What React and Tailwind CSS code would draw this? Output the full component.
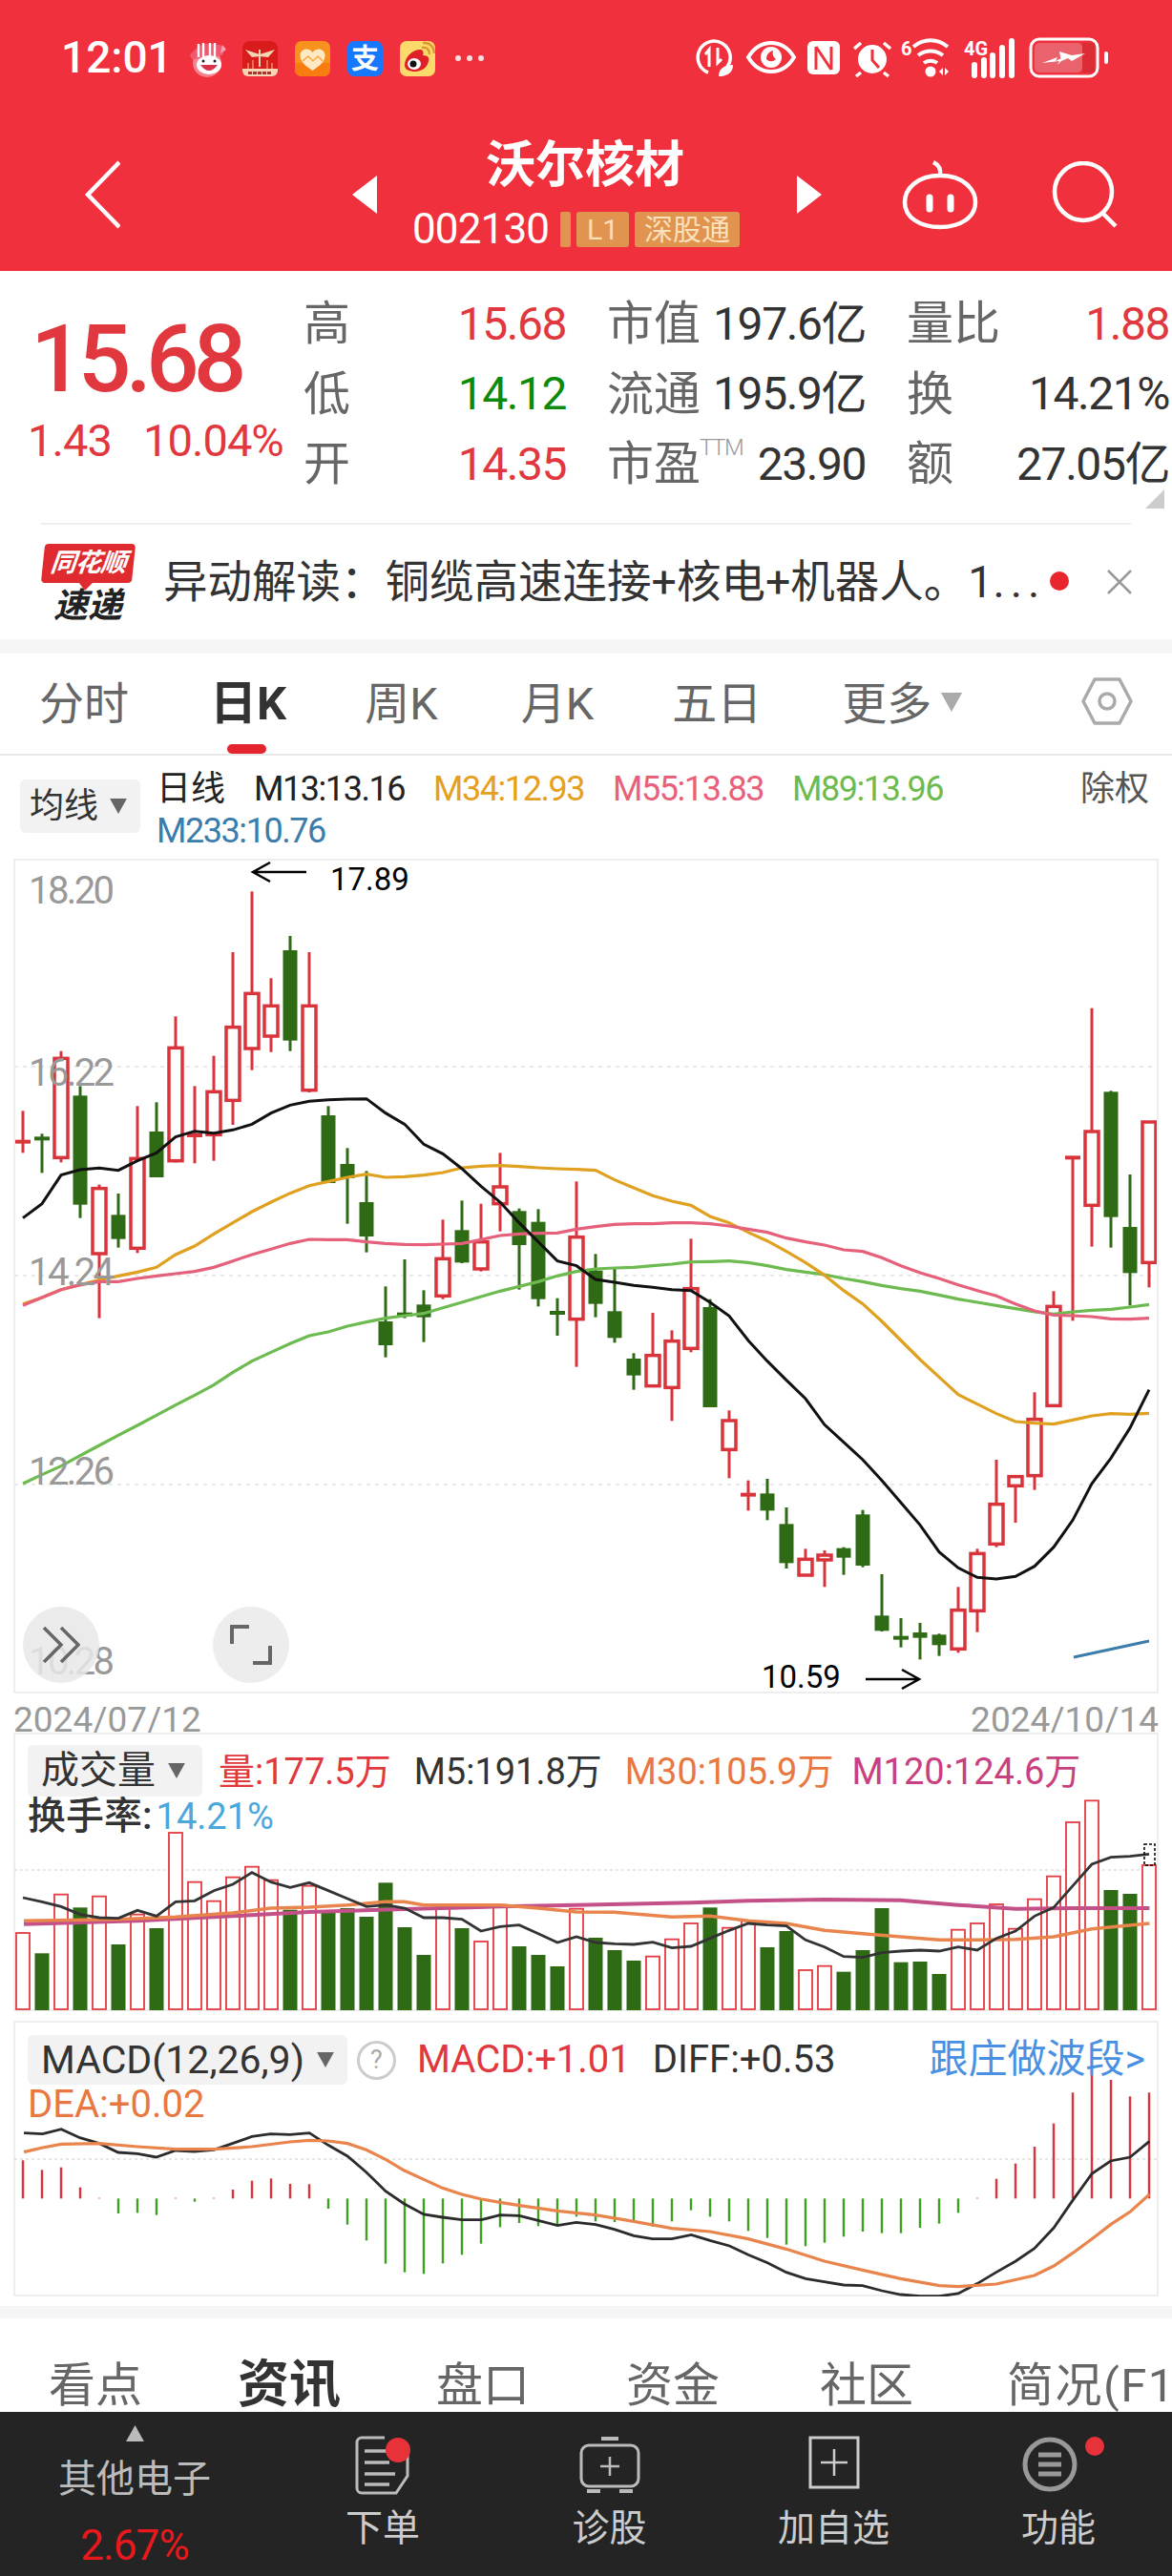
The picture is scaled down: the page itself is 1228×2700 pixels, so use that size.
import React from 'react'

// chart data was read off the reference in thirds of a pixel: y = 880 + p / 3
const candles = [
  ['r',853,950,950,985],['g',925,940,940,1048],['r',665,688,1000,1015],['g',775,805,1148,1190],['r',1085,1097,1302,1505],
  ['g',1113,1180,1256,1283],['r',838,1003,1285,1300],['g',826,918,1062,1062],['r',556,655,1010,1015],['r',775,930,930,1018],
  ['r',680,793,928,1010],['r',354,590,820,897],['r',163,484,657,725],['r',436,523,618,668],['g',303,348,632,665],
  ['r',354,523,788,795],['g',838,867,1080,1080],['g',970,1020,1065,1208],['g',1042,1140,1248,1298],['g',1405,1515,1590,1628],
  ['g',1320,1493,1493,1505],['g',1417,1462,1502,1580],['r',1195,1318,1435,1445],['g',1135,1228,1330,1332],['r',1145,1265,1350,1358],
  ['r',985,1092,1145,1232],['g',1160,1168,1275,1415],['g',1162,1202,1445,1468],['g',1442,1488,1488,1560],['r',1075,1250,1508,1658],
  ['g',1303,1355,1460,1502],['g',1347,1483,1567,1582],['g',1615,1632,1685,1730],['r',1488,1622,1718,1718],['r',1543,1577,1723,1828],
  ['r',1255,1412,1600,1612],['g',1445,1470,1785,1785],['r',1795,1827,1918,2008],['r',2015,2060,2060,2110],['g',2010,2056,2110,2140],
  ['g',2100,2152,2275,2292],['r',2230,2263,2313,2313],['r',2235,2250,2265,2350],['g',2225,2228,2258,2312],['g',2108,2122,2283,2288],
  ['g',2310,2440,2488,2490],['g',2448,2510,2510,2540],['g',2463,2493,2510,2578],['g',2497,2500,2533,2567],['r',2350,2423,2545,2557],
  ['r',2230,2245,2425,2492],['r',1950,2090,2215,2225],['r',2002,2003,2032,2148],['r',1738,1823,2000,2045],['r',1420,1468,1780,1780],
  ['r',1000,1000,1000,1513],['r',530,918,1150,1280],['g',790,793,1187,1283],['g',1053,1218,1363,1465],['r',888,888,1330,1408],
]
const m13 = [1190,1145,1055,1038,1033,1040,1010,985,935,917,923,913,895,860,835,823,818,816,815,860,895,958,988,1035,1090,1140,1205,1265,1325,1340,1383,1392,1402,1408,1415,1418,1455,1498,1575,1640,1700,1758,1840,1895,1950,2015,2085,2155,2240,2290,2320,2325,2317,2285,2225,2140,2025,1945,1850,1730]
const m34 = [1460,1440,1415,1400,1385,1372,1360,1345,1305,1278,1240,1205,1170,1140,1112,1088,1075,1062,1052,1062,1060,1055,1047,1032,1027,1025,1028,1032,1035,1037,1040,1070,1095,1120,1137,1150,1185,1205,1235,1262,1295,1330,1370,1418,1460,1515,1575,1635,1690,1745,1775,1805,1830,1835,1838,1825,1812,1805,1807,1804]
const m55 = [1465,1440,1415,1400,1390,1390,1380,1372,1365,1358,1345,1325,1305,1288,1270,1257,1258,1258,1265,1270,1273,1274,1272,1270,1258,1245,1240,1238,1237,1225,1217,1210,1208,1208,1205,1205,1208,1215,1225,1235,1253,1265,1275,1290,1295,1315,1340,1362,1380,1400,1418,1435,1460,1482,1495,1497,1500,1507,1508,1505]
const m89 = [2025,1997,1970,1937,1905,1873,1842,1810,1778,1747,1715,1675,1640,1612,1585,1560,1548,1530,1517,1505,1497,1490,1472,1455,1437,1420,1405,1390,1372,1358,1350,1347,1345,1340,1335,1328,1327,1325,1330,1340,1352,1360,1368,1380,1390,1402,1412,1420,1432,1445,1455,1465,1475,1485,1492,1485,1480,1477,1470,1462]

const volTops = [678,742,557,598,563,714,620,663,363,518,578,503,470,512,605,530,610,600,627,520,660,747,600,663,705,590,720,747,783,602,693,732,765,752,698,648,598,662,640,723,672,795,782,800,732,600,770,768,807,668,648,588,665,572,500,330,262,543,555,465]
const volRed = [0,2,4,6,8,9,10,11,12,13,15,22,24,25,29,33,34,35,37,38,41,42,49,50,51,52,53,54,55,56,59]
const volM5 = [567,580,595,620,630,632,607,625,580,577,545,525,488,518,535,520,545,570,595,590,600,630,630,635,672,658,653,680,708,690,708,712,714,707,725,720,695,670,648,653,656,700,722,752,755,740,735,732,735,722,732,695,672,625,598,530,462,440,437,430]
const volM30 = [[32,640],[158,635],[235,628],[311,615],[362,600],[414,597],[465,590],[516,580],[541,580],[567,590],[669,590],[720,600],[771,612],[822,613],[899,628],[950,625],[1001,640],[1052,648],[1103,670],[1154,680],[1205,690],[1257,700],[1308,700],[1359,698],[1410,690],[1461,665],[1538,648]]
const volM120 = [[32,650],[184,640],[311,625],[414,612],[541,603],[669,595],[771,590],[925,583],[1001,577],[1103,573],[1205,575],[1282,590],[1359,602],[1435,600],[1538,600]]

const macdBars = [433,463,455,518,551,600,598,605,551,563,551,525,497,490,507,508,585,635,685,758,785,790,757,730,695,643,630,640,633,610,625,627,627,642,625,590,610,625,655,677,698,703,692,673,657,662,662,645,632,598,551,491,443,390,317,220,165,180,232,220]
const diff = [[32,347],[57,350],[82,335],[107,362],[133,380],[158,408],[184,412],[209,423],[235,402],[260,405],[286,400],[311,380],[337,358],[362,350],[388,352],[414,347],[439,385],[465,420],[490,470],[516,530],[541,570],[567,603],[592,612],[618,620],[644,620],[669,605],[695,607],[720,622],[746,638],[771,628],[797,635],[822,650],[848,670],[873,680],[899,680],[925,667],[950,685],[976,702],[1001,730],[1027,755],[1052,785],[1078,805],[1103,815],[1129,825],[1154,827],[1180,843],[1205,855],[1231,860],[1257,860],[1282,852],[1308,820],[1333,785],[1359,750],[1384,710],[1410,645],[1435,560],[1461,475],[1486,435],[1512,423],[1538,373]]
const dea = [[32,407],[57,393],[82,382],[133,380],[184,390],[235,398],[286,398],[337,390],[388,375],[414,370],[439,372],[465,380],[490,400],[516,430],[541,465],[567,493],[592,520],[618,540],[644,555],[669,565],[695,575],[746,592],[797,605],[848,625],[899,647],[950,657],[1001,680],[1052,712],[1103,750],[1154,778],[1205,805],[1257,827],[1282,830],[1333,822],[1384,795],[1410,765],[1435,725],[1461,680],[1486,635],[1512,595],[1538,540]]

const series = (arr, base) => arr.map((p, i) => `${24 + 20 * i},${base + p / 3}`).join(' ')
const pairs = (arr, base) => arr.map(([x, p]) => `${x / 1.277},${base + p / 3}`).join(' ')
const RED = '#d9343c'
const GREEN = '#2f6a15'

function Tri({ className, up }) {
  return (
    <svg className={className} viewBox="0 0 20 18">
      <path d={up ? 'M10 0L20 18H0z' : 'M0 0H20L10 18z'} fill="currentColor" />
    </svg>
  )
}

function AppIcons() {
  return (
    <svg className="w-[330px] h-[60px] shrink-0" viewBox="190 30 330 60">
      <circle cx="217" cy="66" r="15" fill="#f7818f" />
      <path d="M199 58c6-8 12-12 18-12s14 0 19 4l-3 8-32 4z" fill="#ef5a72" />
      <path d="M208 46v14M213 45v15M220 45v15M225 45v15" stroke="#fff" strokeWidth="2.4" />
      <ellipse cx="219" cy="68" rx="13" ry="10" fill="#fff" />
      <path d="M210 68q9 12 18 0z" fill="#d8324a" />
      <circle cx="213" cy="64" r="1.5" fill="#222" /><circle cx="225" cy="64" r="1.5" fill="#222" />
      <path d="M233 47l4 5-6 4z" fill="#f7a2b0" />

      <rect x="254" y="43" width="37" height="37" rx="8" fill="#d81c1c" />
      <path d="M254 72h37v2a6 6 0 0 1-6 6h-25a6 6 0 0 1-6-6z" fill="#f6d5b5" />
      <path d="M257 52l15 5 16-5-7 8-9-1-8 1z" fill="#f6d5b5" />
      <path d="M272 52v18" stroke="#f6d5b5" strokeWidth="2" />
      <path d="M260 72v-6m5 6v-9m15 9v-9m5 9v-6" stroke="#ef8a70" strokeWidth="1.5" />
      <path d="M260 76.500h25" stroke="#a33" strokeWidth="3" strokeDasharray="4 1" />

      <rect x="309" y="43" width="37" height="37" rx="7" fill="#f8921e" />
      <path d="M309 66h37v7a7 7 0 0 1-7 7h-23a7 7 0 0 1-7-7z" fill="#f97c10" />
      <path d="M327.500 74c-9-6-13-10-13-16 0-7 9-9 13-3 4-6 13-4 13 3 0 6-4 10-13 16z" fill="#ffe9c4" />
      <path d="M317 64l6-5 5 5 5-5 5 5" stroke="#f8a83e" strokeWidth="1.500" fill="none" />

      <rect x="364" y="43" width="37" height="37" rx="7" fill="#1677ff" />
      <text x="382.500" y="72" fontSize="29" fontWeight="700" fill="#fff" textAnchor="middle">支</text>

      <rect x="419" y="43" width="37" height="37" rx="7" fill="#fbd96a" />
      <path d="M424 68c0-9 10-17 17-16 3 1 3 4 2 6 6 0 7 3 6 6-1 7-8 11-14 11-6 0-11-2-11-7z" fill="#df2029" />
      <ellipse cx="434" cy="67" rx="7" ry="6" fill="#fff" />
      <circle cx="433" cy="67" r="3.500" fill="#111" />
      <path d="M442 50c6-1 8 3 8 7M443 45c8-1 12 5 12 11" stroke="#d99a32" strokeWidth="2.500" fill="none" />

      <circle cx="480" cy="61" r="3" fill="#f7dfe0" /><circle cx="492" cy="61" r="3" fill="#f7dfe0" /><circle cx="504" cy="61" r="3" fill="#f7dfe0" />
    </svg>
  )
}

function StatusIcons() {
  return (
    <svg className="w-[450px] h-[60px] shrink-0" viewBox="720 30 450 60" fill="none" stroke="#fff">
      <path d="M762 70a17 17 0 1 0-20 6" strokeWidth="3.500" />
      <path d="M743 70V52l-4 5M752 50v16l4-4" strokeWidth="3" />
      <path d="M753 80c0-8 6-12 15-12 0 8-6 12-15 12z" fill="#fff" stroke="none" />

      <path d="M784 60c6-10 15-15 24-15s18 5 24 15c-6 10-15 15-24 15s-18-5-24-15z" strokeWidth="4" />
      <circle cx="808" cy="60" r="11" fill="#fff" stroke="none" />
      <path d="M803 62c0-5 3-8 7-9-1 4 0 7 3 9-3 3-7 3-10 0z" fill="#f0313d" stroke="none" />

      <rect x="846" y="43" width="34" height="35" rx="6" fill="#fff" stroke="none" />
      <path d="M855 49v24M871 49v24M855 49l16 24" stroke="#f0313d" strokeWidth="3" />

      <circle cx="914" cy="62" r="15" fill="#fff" stroke="none" />
      <path d="M914 52v11l7 8" stroke="#f0313d" strokeWidth="3" />
      <path d="M895 51l7-6M933 51l-7-6M902 76l-5 4M926 76l5 4" strokeWidth="3.500" />

      <text x="944" y="58" fontSize="20" fontWeight="700" fill="#fff" stroke="none">6</text>
      <path d="M957 49c11-9 25-9 36 0M962 58c8-6 18-6 26 0M968 66c4-3 10-3 14 0" strokeWidth="4" />
      <circle cx="975" cy="75" r="5.500" fill="#fff" stroke="none" />
      <path d="M984 75l4-4v8zM990 71l4 4-4 4z" fill="#fff" stroke="none" />

      <text x="1010" y="58" fontSize="20" fontWeight="700" fill="#fff" stroke="none">4G</text>
      <path d="M1021 68v11M1031 63v16M1040 58v21M1050 50v29M1060 43v36" strokeWidth="6" strokeLinecap="round" />

      <rect x="1080" y="41" width="70" height="39" rx="9" strokeWidth="3" />
      <rect x="1084" y="45" width="50" height="31" rx="5" fill="#e9626c" stroke="none" />
      <path d="M1147 45h-13v31h13z" fill="#dc2c36" stroke="none" />
      <path d="M1092 66l16-6-2 4 12-6-10 10 2-4zM1110 54l13 4 14-2-14 8-4-3-7 3z" fill="#fff" stroke="none" />
      <rect x="1157" y="54" width="4" height="13" rx="2" fill="#fff" stroke="none" />
    </svg>
  )
}

function Header() {
  return (
    <div className="h-[284px] shrink-0 bg-[#f0313d] text-white">
      <div className="flex items-center h-[60px] pl-[64px] pr-[58px] mt-[30px]">
        <span className="w-[126px] shrink-0 text-[46px] font-medium leading-none">12:01</span>
        <AppIcons />
        <div className="ml-auto"><StatusIcons /></div>
      </div>
      <div className="flex items-center h-[118px] mt-[55px] pl-[88px]">
        <svg className="w-[38px] h-[72px] shrink-0" viewBox="86 164 38 72" fill="none" stroke="#fff" strokeWidth="4.500">
          <polyline points="123,166 90,200 123,234" />
        </svg>
        <svg className="w-[26px] h-[40px] ml-[243px] shrink-0" viewBox="0 0 26 40"><path d="M26 0V40L0 20z" fill="#fff" /></svg>
        <div className="w-[440px] shrink-0 flex flex-col">
          <div className="text-center text-[52px] font-bold leading-[60px] h-[60px] -mt-[4px] -ml-[4px]">沃尔核材</div>
          <div className="flex items-center pl-[37px] h-[40px] mt-[16px]">
            <span className="text-[44px] tracking-[-0.02em] leading-none w-[155px] shrink-0">002130</span>
            <span className="w-[11px] h-[37px] bg-[#e09450] rounded-[2px] shrink-0" />
            <span className="ml-[6px] w-[55px] h-[37px] bg-[#e09450] rounded-[3px] text-[#fbe0bd] text-[30px] leading-[37px] text-center shrink-0">L1</span>
            <span className="ml-[6px] w-[110px] h-[37px] bg-[#e09450] rounded-[3px] text-[#fbe0bd] text-[30px] leading-[37px] text-center shrink-0">深股通</span>
          </div>
        </div>
        <svg className="w-[26px] h-[40px] shrink-0" viewBox="0 0 26 40"><path d="M0 0V40L26 20z" fill="#fff" /></svg>
        <svg className="w-[82px] h-[74px] ml-[83px] shrink-0" viewBox="942 165 82 74" fill="none" stroke="#fff" strokeWidth="4.500">
          <path d="M983 182c24 0 37 14 37 28 0 16-16 26-37 26s-37-10-37-26c0-14 13-28 37-28z" />
          <path d="M983 182c1-7-1-11-7-14" />
          <path d="M972 205v12M994 205v12" strokeWidth="7" strokeLinecap="round" />
        </svg>
        <svg className="w-[70px] h-[70px] ml-[76px] shrink-0" viewBox="1099 168 70 70" fill="none" stroke="#fff" strokeWidth="4.500">
          <circle cx="1132" cy="200" r="30" />
          <path d="M1152 222l14 14" />
        </svg>
      </div>
    </div>
  )
}

const RED_T = 'text-[#e0383e]'
const GREEN_T = 'text-[#0c8a0c]'
const DARK_T = 'text-[#333333]'
const quoteCells = [
  ['高', '15.68', RED_T], ['市值', '197.6亿', DARK_T], ['量比', '1.88', RED_T],
  ['低', '14.12', GREEN_T], ['流通', '195.9亿', DARK_T], ['换', '14.21%', DARK_T],
  ['开', '14.35', RED_T], ['市盈', '23.90', DARK_T], ['额', '27.05亿', DARK_T],
]

function Quote() {
  return (
    <div className="relative h-[264px] shrink-0 flex pt-[18px]">
      <div className="w-[318px] shrink-0 pl-[32px]">
        <div className="mt-[25px] text-[98px] leading-[100px] tracking-[-0.06em] font-medium text-[#e0383e]">15.68</div>
        <div className="mt-[11px] -ml-[3px] flex text-[47px] leading-[48px] tracking-[-0.02em] text-[#e0383e] whitespace-nowrap">
          <span className="w-[121px]">1.43</span>
          <span>10.04%</span>
        </div>
      </div>
      <div className="mt-[1px] grid grid-cols-[275px_271px_275px] gap-x-[43px] content-start">
        {quoteCells.map(([k, v, c]) => (
          <div key={k} className="h-[73.5px] flex items-center justify-between whitespace-nowrap">
            <span className="text-[49px] text-[#666666] leading-none">
              {k}
              {k === '市盈' && <sup className="text-[24px] font-light text-[#999999] -ml-[1px] tracking-[-0.06em] align-[14px]">TTM</sup>}
            </span>
            <span className={`text-[48px] tracking-[-0.03em] leading-none ${c}`}>{v}</span>
          </div>
        ))}
      </div>
      <svg className="absolute right-[8px] bottom-[15px] w-[20px] h-[20px]" viewBox="0 0 20 20"><path d="M20 0V20H0z" fill="#cccccc" /></svg>
    </div>
  )
}

function News() {
  return (
    <>
      <div className="h-[2px] mx-[43px] bg-[#eeeeee] shrink-0" />
      <div className="h-[120px] shrink-0 flex items-center pl-[43px]">
        <div className="w-[98px] shrink-0 flex flex-col items-center">
          <div className="relative w-[95px] h-[41px] bg-[#df2b30] rounded-[4px] -skew-x-6 text-white text-[27px] font-bold italic leading-[41px] text-center tracking-[-0.02em]">
            同花顺
            <span className="absolute left-[40px] -bottom-[8px] w-0 h-0 border-x-[7px] border-x-transparent border-t-[8px] border-t-[#df2b30]" />
          </div>
          <div className="mt-[8px] text-[36px] font-bold italic leading-[32px] text-[#222222]">速递</div>
        </div>
        <div className="ml-[30px] w-[921px] shrink-0 text-[46.500px] text-[#333333] leading-none whitespace-nowrap">
          异动解读：铜缆高速连接+核电+机器人。1<span className="tracking-[6px]">...</span>
        </div>
        <span className="ml-[8px] -mt-[2px] w-[20px] h-[20px] rounded-full bg-[#e9262e] shrink-0" />
        <svg className="w-[26px] h-[26px] ml-[40px] shrink-0" viewBox="0 0 26 26" stroke="#999999" strokeWidth="2.500"><path d="M1 1l24 24M25 1L1 25" /></svg>
      </div>
      <div className="h-[15px] bg-[#f5f5f5] shrink-0" />
    </>
  )
}

const tabs = [
  ['分时', 'ml-[0px] text-[#666666]'],
  ['日K', 'ml-[85px] text-[49px] text-[#333333] font-bold'],
  ['周K', 'ml-[82px] text-[#666666]'],
  ['月K', 'ml-[87px] text-[#666666]'],
  ['五日', 'ml-[82px] text-[#666666]'],
  ['更多', 'ml-[84px] text-[#666666]'],
]

function Tabs() {
  return (
    <div className="relative h-[107px] shrink-0 border-b-2 border-[#e8e8e8] flex items-center pl-[41px]">
      {tabs.map(([t, c]) => (
        <span key={t} className={`text-[47px] leading-none whitespace-nowrap ${c}`}>{t}</span>
      ))}
      <Tri className="w-[24px] h-[20px] ml-[9px] text-[#aaaaaa] mb-[3px]" />
      <svg className="w-[54px] h-[52px] ml-auto mr-[41px] shrink-0 -mt-[6px]" viewBox="0 0 54 52" fill="none" stroke="#aaaaaa" strokeWidth="3.500">
        <path d="M14 3h26l12 23-12 23H14L2 26z" strokeLinejoin="round" />
        <circle cx="27" cy="26" r="8" />
      </svg>
      <span className="absolute left-[238px] bottom-0 w-[41px] h-[10px] rounded-full bg-[#e5252d]" />
    </div>
  )
}

function MaLegend() {
  return (
    <div className="h-[108px] shrink-0 flex pl-[21px] pr-[24px]">
      <div className="mt-[25px] w-[126px] h-[56px] bg-[#f2f2f2] rounded-[6px] flex items-center pl-[10px] shrink-0">
        <span className="text-[36px] text-[#333333] leading-none">均线</span>
        <Tri className="w-[20px] h-[16px] ml-[11px] text-[#666666]" />
      </div>
      <div className="ml-[17px] flex-1 pt-[15px] text-[36px] tracking-[-0.04em] whitespace-nowrap">
        <div className="flex h-[40px] leading-[40px] items-center">
          <span className="w-[102px] tracking-normal text-[#222222]">日线</span>
          <span className="w-[188px] text-[#222222]">M13:13.16</span>
          <span className="w-[188px] text-[#e5a020]">M34:12.93</span>
          <span className="w-[188px] text-[#e8607a]">M55:13.83</span>
          <span className="text-[#6dbb50]">M89:13.96</span>
          <span className="ml-auto tracking-normal text-[#555555]">除权</span>
        </div>
        <div className="h-[47px] leading-[49px] text-[#3a7cab]">M233:10.76</div>
      </div>
    </div>
  )
}

function Candle({ d, i }) {
  const [c, high, top, bottom, low] = d
  const x = 24 + 20 * i
  const y = (p) => 880 + p / 3
  const color = c === 'r' ? RED : GREEN
  const flat = top === bottom
  return (
    <g>
      <line x1={x} x2={x} y1={y(high)} y2={y(low)} stroke={color} strokeWidth="3" />
      {flat ? (
        <rect x={x - 8} y={y(top) - 2} width="16" height="4" fill={color} />
      ) : c === 'r' ? (
        <rect x={x - 7} y={y(top)} width="14" height={(bottom - top) / 3} fill="#fff" stroke={color} strokeWidth="3.500" />
      ) : (
        <rect x={x - 7.500} y={y(top)} width="15" height={(bottom - top) / 3} fill={color} />
      )}
    </g>
  )
}

const axisLabel = 'absolute left-[16px] text-[40px] leading-none tracking-[-0.065em] text-[#999999]'

function MainChart() {
  return (
    <div className="relative ml-[14px] w-[1200px] h-[875px] shrink-0 outline-2 -outline-offset-2 outline-[#eeeeee]">
      <svg className="block w-[1200px] h-[875px]" viewBox="14 900 1200 875" fill="none">
        {[1118, 1337, 1556].map((y) => (
          <line key={y} x1="15" x2="1213" y1={y} y2={y} stroke="#e2e2e2" strokeWidth="1.500" strokeDasharray="4 5" />
        ))}
        {candles.map((d, i) => <Candle key={i} d={d} i={i} />)}
        <polyline points={series(m89, 880)} stroke="#6dbb50" strokeWidth="3.200" />
        <polyline points={series(m34, 880)} stroke="#e0a020" strokeWidth="3.200" />
        <polyline points={series(m55, 880)} stroke="#e5607a" strokeWidth="3.200" />
        <polyline points={series(m13, 880)} stroke="#111111" strokeWidth="3" />
        <line x1="1125" y1="1737" x2="1204" y2="1720" stroke="#3a7cab" strokeWidth="3" />
        <g stroke="#000000" strokeWidth="2.500">
          <path d="M321 914H265M283 904l-18 10 18 10" />
          <path d="M907 1760H963M945 1750l18 10-18 10" />
        </g>
      </svg>
      <span className={`${axisLabel} top-[14px]`}>18.20</span>
      <span className={`${axisLabel} top-[205px]`}>16.22</span>
      <span className={`${axisLabel} top-[414px]`}>14.24</span>
      <span className={`${axisLabel} top-[623px]`}>12.26</span>
      <span className={`${axisLabel} top-[822px]`}>10.28</span>
      <span className="absolute left-[332px] top-[5px] text-[33px] leading-none text-black">17.89</span>
      <span className="absolute left-[784px] top-[841px] text-[33px] leading-none text-black">10.59</span>
      <div className="absolute left-[10px] top-[784px] w-[80px] h-[80px] rounded-full bg-[#e8e8e8]/85 flex items-center justify-center">
        <svg className="w-[40px] h-[40px]" viewBox="0 0 40 40" fill="none" stroke="#666666" strokeWidth="3.500">
          <path d="M2 2l18 18L2 38M20 2l18 18-18 18" />
        </svg>
      </div>
      <div className="absolute left-[209px] top-[784px] w-[80px] h-[80px] rounded-full bg-[#ededed] flex items-center justify-center">
        <svg className="w-[44px] h-[42px]" viewBox="0 0 44 42" fill="none" stroke="#666666" strokeWidth="4">
          <path d="M20 2H2v18M42 22v18H24" />
        </svg>
      </div>
    </div>
  )
}

function VolumePanel() {
  const y = (p) => 1800 + p / 3
  return (
    <div className="relative ml-[14px] w-[1200px] h-[292px] shrink-0 outline-2 -outline-offset-2 outline-[#eeeeee]">
      <svg className="absolute inset-0 w-[1200px] h-[292px]" viewBox="14 1816 1200 292" fill="none">
        <line x1="15" x2="1213" y1="1960" y2="1960" stroke="#d0d0d0" strokeWidth="1.200" strokeDasharray="3 3" />
        {volTops.map((p, i) => {
          const x = 24 + 20 * i
          return volRed.includes(i) ? (
            <rect key={i} x={x - 7} y={y(p)} width="14" height={2106 - y(p)} fill="#fff" stroke="#e33b42" strokeWidth="1.800" />
          ) : (
            <rect key={i} x={x - 7.500} y={y(p)} width="15" height={2107 - y(p)} fill={GREEN} />
          )
        })}
        <polyline points={pairs(volM120, 1800)} stroke="#c45088" strokeWidth="4" />
        <polyline points={pairs(volM30, 1800)} stroke="#e8844c" strokeWidth="3.500" />
        <polyline points={series(volM5, 1800)} stroke="#333333" strokeWidth="2.800" />
        <rect x="1199" y="1933" width="11" height="22" stroke="#000" strokeWidth="1.500" strokeDasharray="3 2" />
      </svg>
      <div className="relative pl-[15px] pt-[13px] whitespace-nowrap text-[38px]">
        <div className="flex items-center h-[54px]">
          <div className="w-[183px] h-[54px] bg-[#f2f2f2] rounded-[6px] flex items-center pl-[14px] shrink-0">
            <span className="text-[40px] text-[#333333] leading-none">成交量</span>
            <Tri className="w-[20px] h-[16px] ml-[12px] text-[#666666]" />
          </div>
          <span className="ml-[17px] pt-[3px] text-[#e0383e]">量:177.5万</span>
          <span className="ml-[24px] pt-[3px] text-[#333333]">M5:191.8万</span>
          <span className="ml-[24px] pt-[3px] text-[#e87840]">M30:105.9万</span>
          <span className="ml-[19px] pt-[3px] text-[#c84080]">M120:124.6万</span>
        </div>
        <div className="flex items-center h-[40px] pt-[2px]">
          <span className="text-[40px] font-medium text-[#333333]">换手率:</span>
          <span className="ml-[4px] text-[#4aa8dc]">14.21%</span>
        </div>
      </div>
    </div>
  )
}

function MacdPanel() {
  const y = (p) => 2120 + p / 3
  return (
    <div className="relative ml-[14px] w-[1200px] h-[289px] mt-[10px] shrink-0 outline-2 -outline-offset-2 outline-[#eeeeee]">
      <svg className="absolute inset-0 w-[1200px] h-[289px]" viewBox="14 2118 1200 289" fill="none">
        <line x1="15" x2="1213" y1="2263" y2="2263" stroke="#d0d0d0" strokeWidth="1.200" strokeDasharray="3 3" />
        {macdBars.map((p, i) => {
          const x = 24 + 20 * i
          return <line key={i} x1={x} x2={x} y1={y(553)} y2={y(p)} stroke={p < 553 ? RED : '#3fa020'} strokeWidth="2.400" />
        })}
        <polyline points={pairs(diff, 2120)} stroke="#2b2b2b" strokeWidth="2.800" />
        <polyline points={pairs(dea, 2120)} stroke="#e8844c" strokeWidth="3.200" />
      </svg>
      <div className="relative pl-[15px] pt-[15px] whitespace-nowrap text-[40px]">
        <div className="flex items-center h-[52px]">
          <div className="w-[335px] h-[52px] bg-[#f2f2f2] rounded-[6px] flex items-center pl-[14px] shrink-0">
            <span className="text-[41px] text-[#333333] leading-none">MACD(12,26,9)</span>
            <Tri className="w-[20px] h-[16px] ml-[12px] text-[#666666]" />
          </div>
          <span className="ml-[10px] w-[41px] h-[41px] rounded-full border-[3px] border-[#cccccc] text-[#aaaaaa] text-[27px] leading-[35px] text-center shrink-0">?</span>
          <span className="ml-[22px] text-[#e0383e]">MACD:+1.01</span>
          <span className="ml-[23px] text-[#333333]">DIFF:+0.53</span>
          <span className="ml-auto mr-[14px] text-[#4a90e2] text-[41px]">跟庄做波段&gt;</span>
        </div>
        <div className="h-[42px] leading-[42px] text-[#e87840]">DEA:+0.02</div>
      </div>
    </div>
  )
}

const infoTabs = [
  ['看点', 'ml-[0px] text-[49px] text-[#666666]'],
  ['资讯', 'ml-[100px] text-[54px] font-bold text-[#333333]'],
  ['盘口', 'ml-[100px] text-[49px] text-[#666666]'],
  ['资金', 'ml-[101px] text-[49px] text-[#666666]'],
  ['社区', 'ml-[105px] text-[49px] text-[#666666]'],
  ['简况(F10)', 'ml-[98px] text-[49px] tracking-[0.03em] text-[#666666]'],
]

function InfoTabs() {
  return (
    <div className="h-[98px] shrink-0 overflow-hidden pt-[45px] pl-[51px]">
      <div className="flex items-center h-[50px] whitespace-nowrap leading-none">
        {infoTabs.map(([t, c]) => <span key={t} className={c}>{t}</span>)}
      </div>
    </div>
  )
}

function BottomItem({ label, children }) {
  return (
    <div className="flex flex-col items-center pt-[25px]">
      <div className="h-[60px]">{children}</div>
      <span className="mt-[15px] text-[39px] leading-[44px] text-[#cccccc]">{label}</span>
    </div>
  )
}

function BottomBar() {
  return (
    <div className="h-[172px] shrink-0 bg-[#242424] grid grid-cols-[282px_238px_237px_233px_238px]">
      <div className="flex flex-col items-center pt-[14px]">
        <Tri up className="w-[31px] h-[17px] text-[#bbbbbb]" />
        <span className="mt-[18px] text-[40px] leading-[44px] text-[#bbbbbb]">其他电子</span>
        <span className="mt-[25px] text-[44px] leading-[44px] tracking-[-0.02em] text-[#e8191c]">2.67%</span>
      </div>
      <BottomItem label="下单">
        <svg className="w-[60px] h-[62px]" viewBox="0 0 60 62" fill="none" stroke="#bbbbbb" strokeWidth="3">
          <path d="M32 2H8a5 5 0 0 0-5 5v48a5 5 0 0 0 5 5h36l12-18V20" />
          <path d="M11 16h26M11 28h26M11 40h32M11 51h26" strokeWidth="3.500" />
          <circle cx="46" cy="15" r="13" fill="#e8323a" stroke="none" />
        </svg>
      </BottomItem>
      <BottomItem label="诊股">
        <svg className="w-[64px] h-[60px]" viewBox="0 0 64 60" fill="none" stroke="#bbbbbb" strokeWidth="3">
          <path d="M23 3h18" strokeWidth="4" />
          <rect x="2" y="10" width="60" height="43" rx="8" />
          <path d="M32 22v20M22 32h20" strokeWidth="2.500" />
          <path d="M8 58h14M42 58h14" strokeWidth="4" />
        </svg>
      </BottomItem>
      <BottomItem label="加自选">
        <svg className="w-[54px] h-[56px]" viewBox="0 0 54 56" fill="none" stroke="#cccccc" strokeWidth="3">
          <rect x="2" y="2" width="50" height="52" />
          <path d="M27 14v28M13 28h28" strokeWidth="2.500" />
        </svg>
      </BottomItem>
      <BottomItem label="功能">
        <svg className="w-[96px] h-[60px] ml-[20px]" viewBox="0 0 96 60" fill="none" stroke="#999999">
          <circle cx="29" cy="30" r="26" strokeWidth="5" />
          <path d="M17 20h24M17 30h24M17 40h24" strokeWidth="5" />
          <circle cx="76" cy="11" r="10" fill="#e8323a" stroke="none" />
        </svg>
      </BottomItem>
    </div>
  )
}

export default function App() {
  return (
    <div className="w-[1228px] h-[2700px] overflow-hidden bg-white flex flex-col font-[family-name:Roboto,'Noto_Sans_CJK_SC',sans-serif]">
      <Header />
      <Quote />
      <News />
      <Tabs />
      <MaLegend />
      <MainChart />
      <div className="h-[41px] shrink-0 flex justify-between pl-[14px] pr-[14px] pt-[13px] text-[37px] leading-[30px] text-[#999999]">
        <span>2024/07/12</span>
        <span>2024/10/14</span>
      </div>
      <VolumePanel />
      <MacdPanel />
      <div className="h-[23px] shrink-0 pt-[10px]"><div className="h-[13px] bg-[#f5f5f5]" /></div>
      <InfoTabs />
      <BottomBar />
    </div>
  )
}
